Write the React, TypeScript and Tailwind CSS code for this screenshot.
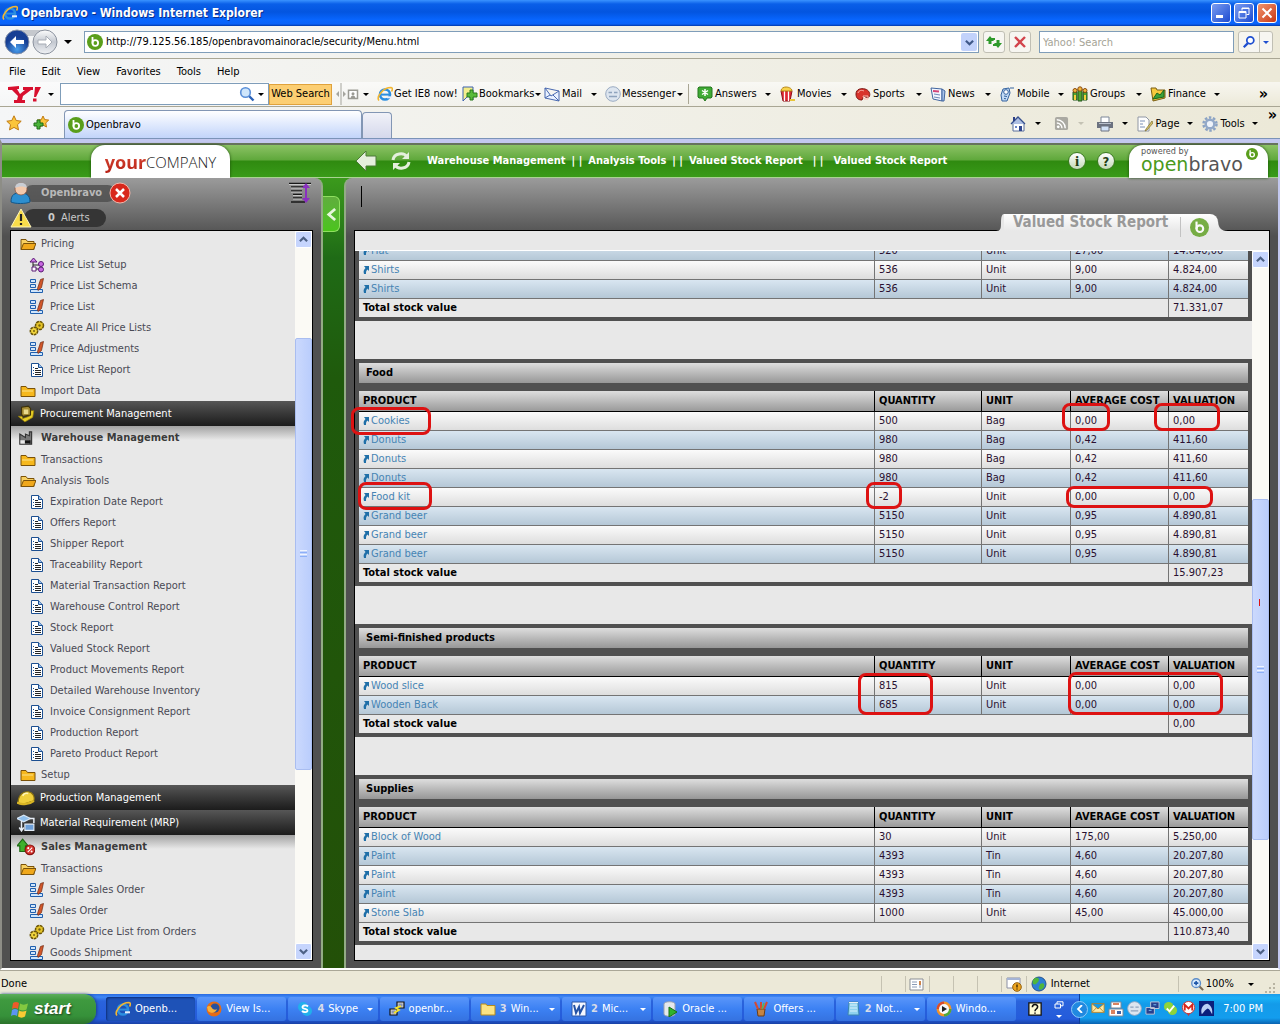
import React from "react";

type IconName = keyof typeof icons;

interface MenuEntry {
  kind: "folder" | "item" | "module" | "open";
  icon: IconName;
  label: string;
}

interface StockRow {
  product: string;
  quantity: string;
  unit: string;
  cost: string;
  value: string;
}

interface StockGroup {
  name: string;
  rows: StockRow[];
  total: string;
}

const icons = {
  ie: (
    <>
      <circle cx="8" cy="8.5" r="5" fill="none" stroke="#2b8ee0" strokeWidth="2.6" />
      <path d="M4 8.6h9" stroke="#2b8ee0" strokeWidth="2" />
      <path d="M10 10.3h5v2h-5z" fill="#e9eefb" />
      <path d="M2 14.5C-1 11 6 1.500 14 1.500c2 .3 1.500 2.500.5 4" fill="none" stroke="#f2b632" strokeWidth="1.600" />
    </>
  ),
  ob: (
    <>
      <circle cx="8" cy="8" r="8" fill="#5a9e1c" />
      <path d="M5.500 3v6.500" stroke="#fff" strokeWidth="1.800" />
      <circle cx="8.300" cy="9" r="2.800" fill="none" stroke="#fff" strokeWidth="1.800" />
    </>
  ),
  lens: (
    <>
      <path d="M9.500 9.500l5 5" stroke="#2a62b8" strokeWidth="2.400" />
      <circle cx="6.500" cy="6.500" r="4.800" fill="#cfe6fb" stroke="#5a8fd8" strokeWidth="1.600" />
    </>
  ),
  searchBlue: (
    <>
      <path d="M7 9l-5 5" stroke="#1f4fd0" strokeWidth="2.600" />
      <circle cx="9.500" cy="6" r="4" fill="#fff" stroke="#1f4fd0" strokeWidth="2" />
    </>
  ),
  bookmark: (
    <>
      <path d="M1 1h10v13l-5-4-5 5z" fill="#f3ee8e" stroke="#3d62b0" />
      <path d="M8 4h3v3h4v4h-4v3H8v-3H5V7h3z" fill="#58bb3a" stroke="#2b7a1c" />
    </>
  ),
  mail: <path d="M1 2l14 3v10L1 12zM1 2l6 8 8-5M1 12l5-3M15 15L9 9" fill="#eaf2ff" stroke="#4969b0" />,
  face: (
    <>
      <circle cx="8" cy="8" r="7.300" fill="#dde5ef" stroke="#9aabc2" />
      <path d="M3.500 6.500h3.500M9 6.500h3.500M4 10.500h8" stroke="#8fa3bd" strokeWidth="1.300" />
    </>
  ),
  answers: (
    <>
      <path d="M2 1h12l1 1v9l-1 1h-4l-2 3-2-3H2l-1-1V2z" fill="#3faa35" stroke="#24771e" />
      <path d="M8 3v7M5 4.500l6 4M11 4.500l-6 4" stroke="#fff" strokeWidth="1.500" />
    </>
  ),
  movies: (
    <>
      <path d="M2 5h11l-2 10H4z" fill="#e02832" stroke="#8c1018" />
      <path d="M5.500 5v10M9.500 5v10" stroke="#fff" strokeWidth="1.300" />
      <path d="M2 5c0-3 3-4 5-4s6 1 6 4z" fill="#f8d34a" stroke="#b78718" />
      <path d="M11 13h5v2h-5z" fill="#e8c53a" />
    </>
  ),
  sports: (
    <>
      <path d="M1 8c0-5 5-6 9-5 4 1 6 5 4 8-2 1-4 0-5-1l-2 4c-4 0-6-2-6-6z" fill="#d8332c" stroke="#7d1714" />
      <path d="M3 7c1-3 4-3 6-2M8 10h5v3H9z" stroke="#f9b7ae" fill="none" />
    </>
  ),
  news: (
    <>
      <path d="M1 2l11 1v12L3 13z" fill="#f3f6ff" stroke="#40659f" />
      <path d="M12 3l3 2-1 10h-2z" fill="#a9c4ea" stroke="#40659f" />
      <path d="M3 5l6 .5" stroke="#d34477" strokeWidth="2" />
      <path d="M4 8l6 1M4 11l6 1" stroke="#6e88b5" />
    </>
  ),
  mobile: (
    <>
      <path d="M4 3l6-1 1 5-3 8H3L2 9z" fill="#c3dbf5" stroke="#34629f" />
      <circle cx="7" cy="6" r="2.300" fill="#fff" stroke="#34629f" />
      <path d="M5 10l3 .5M5 12.500l2 .3M12 1v2M14 1v2" stroke="#34629f" />
    </>
  ),
  groups: (
    <>
      <path d="M1 6h4v8H1zM6 3h4v12H6zM11 6h4v8h-4z" fill="#4fa531" stroke="#23571a" />
      <circle cx="3" cy="4.500" r="2" fill="#f2b63b" stroke="#8a4a12" />
      <circle cx="8" cy="3" r="2.200" fill="#f2b63b" stroke="#8a4a12" />
      <circle cx="13" cy="4.500" r="2" fill="#f2b63b" stroke="#8a4a12" />
      <path d="M3 9v5M13 9v5" stroke="#f6cf3c" strokeWidth="2" />
    </>
  ),
  finance: (
    <>
      <path d="M1 2h5l1 2h8v8l-12 3z" fill="#f7c93d" stroke="#7a5f14" />
      <path d="M3 13l4-6 3 2 4-5v7z" fill="#3ba23b" stroke="#1d651d" />
    </>
  ),
  toolbarGrey: (
    <>
      <path d="M2 3h12v11H2z" fill="#fff" stroke="#9b9b94" strokeWidth="2" />
      <path d="M5 14c0-3 1-4 3-4s3 1 3 4z" fill="#9b9b94" />
      <circle cx="8" cy="7.500" r="2" fill="#9b9b94" />
    </>
  ),
  star: <path d="M8 .8l2.200 4.700 5 .7-3.700 3.500 1 5.200L8 12.400l-4.500 2.500 1-5.200L.8 6.200l5-.7z" fill="#fbc53a" stroke="#c07a12" />,
  starPlus: (
    <>
      <path d="M10 1l1.700 3.600 4 .5-3 2.800.8 4.100L10 10l-3.500 2 .8-4.100-3-2.800 4-.5z" fill="#fbc53a" stroke="#c07a12" />
      <path d="M4 5h3v3h3v3H7v3H4v-3H1V8h3z" fill="#4bb43a" stroke="#1e6d19" />
    </>
  ),
  home: (
    <>
      <path d="M3 7h11v8H3z" fill="#fff" stroke="#5a6f9c" />
      <path d="M1 8l7-7 7 7" fill="#aebfe2" stroke="#354f8e" strokeWidth="1.300" />
      <path d="M3 1h2v4H3z" fill="#2c3f84" />
      <path d="M9 10h3v5H9z" fill="#30478f" />
      <path d="M5 10h2v2H5z" fill="#6b86c6" />
    </>
  ),
  rss: (
    <>
      <rect x="1" y="1" width="14" height="14" rx="2" fill="#aaa9a2" />
      <circle cx="4.500" cy="11.500" r="1.500" fill="#fff" />
      <path d="M3 7.500a5.500 5.500 0 0 1 5.500 5.500M3 4a9 9 0 0 1 9 9" fill="none" stroke="#fff" strokeWidth="1.500" />
    </>
  ),
  printer: (
    <>
      <path d="M4 1h8v6H4z" fill="#fff" stroke="#7c8798" />
      <path d="M0 6h16v6H0z" fill="#6c7280" />
      <path d="M2 7h12v1H2z" fill="#b9c0cc" />
      <path d="M4 10h8v5H4z" fill="#d3e2f7" stroke="#6c7280" />
    </>
  ),
  page: (
    <>
      <path d="M1 1h8l3 3v11H1z" fill="#fdfdfd" stroke="#9097a4" />
      <path d="M3 5h5M3 8h3M3 11h5" stroke="#7a90b8" />
      <path d="M15 5l-6 8-1 2 2-1 6-7z" fill="#d5c26c" stroke="#7d6b28" strokeWidth=".7" />
    </>
  ),
  gear: (
    <>
      <circle cx="8" cy="8" r="6.500" fill="none" stroke="#8ba3c4" strokeWidth="2.500" strokeDasharray="2.500 1.600" />
      <circle cx="8" cy="8" r="4.300" fill="#eef3fa" stroke="#93a9c8" strokeWidth="2.400" />
    </>
  ),
  folder: (
    <>
      <path d="M1 3.500h5l1.500 2H15v8H1z" fill="#f6b81d" stroke="#7b5208" />
      <path d="M2 7.500h11v1H2z" fill="#fde28a" />
    </>
  ),
  folderOpen: (
    <>
      <path d="M1 3.500h5l1.500 2H14v8H1z" fill="#f7d061" stroke="#7b5208" />
      <path d="M3.500 7.500H16l-2.500 6H1z" fill="#f0a81b" stroke="#7b5208" />
    </>
  ),
  form: (
    <>
      <path d="M1.500 1.500h5v3h-5zM1.500 6.500h5v3h-5zM1.500 11.500h12v3h-12z" fill="#cfe5fb" stroke="#1f5fae" />
      <path d="M11.500 1.500l3-1-2 9-3.500 3-.5-2z" fill="#d2572a" stroke="#6e2a12" strokeWidth=".7" />
    </>
  ),
  process: (
    <>
      <circle cx="10.500" cy="5.500" r="4" fill="#e6c528" stroke="#6a5408" strokeWidth="1.500" strokeDasharray="3 .7" />
      <circle cx="5" cy="11" r="3.700" fill="#f0d43c" stroke="#6a5408" strokeWidth="1.500" strokeDasharray="2.600 .7" />
      <circle cx="10.500" cy="5.500" r="1.200" fill="#7a6410" />
      <circle cx="5" cy="11" r="1" fill="#7a6410" />
    </>
  ),
  report: (
    <>
      <path d="M2.500 1.500h7l4 4v9h-11z" fill="#fff" stroke="#1c4f91" />
      <path d="M9.500 1.500v4h4" fill="#9dc2ec" stroke="#1c4f91" />
      <path d="M4 5.500h1M4 8.500h1M4 11.500h1" stroke="#1c4f91" />
      <path d="M6 6.500h3M6 8.500h6M6 10.500h6M6 12.500h6" stroke="#222" />
    </>
  ),
  tree: (
    <>
      <path d="M4 5v7h6M4 8h6" fill="none" stroke="#222" />
      <path d="M4.500 1L8 5H1z" fill="#d27de8" stroke="#5a1a74" />
      <circle cx="12" cy="7" r="2.500" fill="#c968e2" stroke="#5a1a74" />
      <circle cx="12" cy="12.500" r="2.500" fill="#c968e2" stroke="#5a1a74" />
      <path d="M3 10h4v4H3z" fill="#fff" stroke="#5a1a74" />
    </>
  ),
  procurement: (
    <>
      <path d="M1 10l4 0 0 2 6-2 0-5 4 0-1 6-7 4z" fill="#e8ce26" stroke="#8a7408" strokeWidth=".6" />
      <path d="M4 2l6-1 2 2v6l-7 1-1-2z" fill="#a58c34" stroke="#3d3208" />
      <path d="M6 4h4v4H6z" fill="#e9da8c" />
    </>
  ),
  warehouse: (
    <>
      <path d="M2.500 13.500v-9l5 3V4.500L11 6V2.500h2v11z" fill="#777" stroke="#333" />
      <path d="M3 10h8v3H3z" fill="#e8e8e8" />
      <path d="M7 10h5v3H7z" fill="#111" />
    </>
  ),
  helmet: (
    <>
      <path d="M1 12C1 5 6 2 10 2.500c4 .5 6 4 5 8L4 14z" fill="#f0cf3c" stroke="#8c7310" />
      <path d="M0 12c4 3 12 1 15-1.500" fill="none" stroke="#d9b524" strokeWidth="2" />
      <path d="M5 6c1-2 3-2.500 5-2" stroke="#fff6b8" fill="none" strokeWidth="1.500" />
    </>
  ),
  mrp: (
    <>
      <path d="M0 4l6-3 6 3-6 3z" fill="#8fc0ee" stroke="#d6e6f6" />
      <path d="M4 6v8M2 12l2 3 2-3M11 4h4v4" fill="none" stroke="#e8eef6" strokeWidth="1.300" />
      <path d="M7 9h8v5.500H7z" fill="#6d9fd8" stroke="#e3ecf6" />
    </>
  ),
  sales: (
    <>
      <path d="M5 1l5 6H7.500v5h-5V7H0z" fill="#3fb02c" stroke="#1e6a14" />
      <circle cx="11.500" cy="10.500" r="4.300" fill="#d8342e" stroke="#8a1512" />
      <path d="M9.500 12.500l4-4" stroke="#fff" />
      <circle cx="10" cy="9" r=".9" fill="#fff" />
      <circle cx="13" cy="12" r=".9" fill="#fff" />
    </>
  ),
  firefox: (
    <>
      <circle cx="8" cy="8" r="7.500" fill="#e56b16" />
      <circle cx="9" cy="7" r="4.500" fill="#27509e" />
      <path d="M1 6c2-2 4-1 5 1 1 2 4 2 5 1-1 4-6 5-9 2z" fill="#f8b13c" />
    </>
  ),
  skype: (
    <>
      <circle cx="6" cy="6" r="5" fill="#21b0ec" />
      <circle cx="10" cy="10" r="5" fill="#21b0ec" />
      <path d="M11 5.500C9 3.500 5 4.500 5.500 6.500c.5 2 5 1 5 3s-4 2-5.500.5" fill="none" stroke="#fff" strokeWidth="1.800" />
    </>
  ),
  putty: (
    <>
      <path d="M8 1h7v6H8zM1 8h7v6H1z" fill="#d4d4d4" stroke="#111" strokeWidth="1.200" />
      <path d="M9.500 2.500h4v3h-4zM2.500 9.500h4v3h-4z" fill="#8a94b0" />
      <path d="M12 5L7 7l3 2-5 3" stroke="#f5e425" strokeWidth="1.800" fill="none" />
    </>
  ),
  winFolder: <path d="M1 3h5l1 1.500h8V14H1z" fill="#fbe384" stroke="#b68b1c" />,
  word: (
    <>
      <path d="M1 1h14v14H1z" fill="#f5f8ff" stroke="#2b57a8" />
      <path d="M3 4l2 8 3-6 1 6 4-8" fill="none" stroke="#2452a5" strokeWidth="2" />
    </>
  ),
  oracle: (
    <>
      <path d="M2 3c0-3 11-3 11 0v10c0 3-11 3-11 0z" fill="#e5e8ec" stroke="#9aa2ae" />
      <path d="M7 6l8 5-8 5z" fill="#2fb32d" stroke="#167014" />
    </>
  ),
  brushes: (
    <>
      <path d="M4 8h8l-1 7H5z" fill="#c48444" stroke="#6c3d14" />
      <path d="M5 8L2 1M8 8V1M11 8l3-7" stroke="#d44a32" strokeWidth="2" />
      <path d="M9 8l2-6" stroke="#5bb94b" strokeWidth="1.500" />
    </>
  ),
  notepad: (
    <>
      <path d="M4 1h9l1 13H3z" fill="#8fd2ee" stroke="#3b85b0" />
      <path d="M5 4h7M5 7h7M5 10h7" stroke="#d9f2fb" />
      <path d="M4 1h9v1H4z" fill="#e9eef2" />
    </>
  ),
  player: (
    <>
      <circle cx="8" cy="8" r="7.500" fill="#f2932a" />
      <path d="M8 8V.5A7.500 7.500 0 0 0 .5 8z" fill="#d94b2b" />
      <path d="M8 8h7.500A7.500 7.500 0 0 1 8 15.500z" fill="#4fa83a" />
      <circle cx="8" cy="8" r="5" fill="#f6f8fb" />
      <path d="M6 5l5 3-5 3z" fill="#222" />
    </>
  ),
  globe: (
    <>
      <circle cx="8" cy="8" r="7" fill="#2d7fd6" stroke="#27538d" />
      <path d="M4 2c4-1 5 2 3 4s-2 3-5 2c-1-3 0-5 2-6zM9 8c4-2 5 1 4 3s-4 4-5 2 1-3 1-5z" fill="#4fb53c" />
    </>
  ),
  blocked: (
    <>
      <path d="M1 2h13v10H1z" fill="#fff" stroke="#8b8fa5" />
      <path d="M1 2h13v2H1z" fill="#a5b4d6" />
      <circle cx="11" cy="11" r="4.300" fill="#eda520" stroke="#95600b" />
      <path d="M11 8.500v3M11 12.500v1" stroke="#402a00" strokeWidth="1.400" />
    </>
  ),
  sheet: (
    <>
      <path d="M1 3h13v11H1z" fill="#fff" stroke="#8b8f95" />
      <path d="M3 6h5M3 8.500h5M3 11h5M11 5v7" stroke="#8a9ab5" />
      <path d="M11 5v4" stroke="#d06b1a" strokeWidth="1.500" />
    </>
  ),
  zoom: (
    <>
      <path d="M10 10l5 5" stroke="#7a6a52" strokeWidth="2.400" />
      <circle cx="7" cy="7" r="5" fill="#d8ebfc" stroke="#5b8cc9" strokeWidth="1.500" />
      <path d="M4.500 7h5M7 4.500v5" stroke="#1d56a8" strokeWidth="1.800" />
    </>
  ),
  help: (
    <>
      <path d="M1 1h14v14H1z" fill="#fffbd6" stroke="#111" strokeWidth="1.500" />
      <path d="M5 6c0-4 6-4 6-.5C11 8 8 8 8 10.500M8 12v1.500" fill="none" stroke="#111" strokeWidth="1.800" />
    </>
  ),
  envelope: <path d="M1 3h14v10H1zM1 3l7 6 7-6M1 13l5-5M15 13l-5-5" fill="#fde9a4" stroke="#b3802a" />,
  notes: (
    <>
      <path d="M3 1h10v6H3zM1 8h14v7H1z" fill="#fff" stroke="#7c8798" />
      <path d="M5 3h6M3 10h4M3 12h4" stroke="#d0592a" strokeWidth="1.300" />
      <path d="M9 10h4v3H9z" fill="#3c62a8" />
    </>
  ),
  network: (
    <>
      <path d="M6 1h9v7H6zM1 7h9v7H1z" fill="#26408f" stroke="#c3c9d8" />
      <path d="M4 10h3M9 4h3" stroke="#7dc4f5" />
    </>
  ),
  online: (
    <>
      <circle cx="6" cy="6" r="5" fill="#8ed33a" />
      <circle cx="10" cy="10" r="5" fill="#8ed33a" />
      <path d="M4 8l3 3 5-6" fill="none" stroke="#fff" strokeWidth="2" />
    </>
  ),
  gmail: (
    <>
      <circle cx="8" cy="7" r="6.500" fill="#fff" stroke="#c33" />
      <path d="M4 10V4l4 4 4-4v6" fill="none" stroke="#d9261c" strokeWidth="2" />
      <path d="M6 13l2 3 2-3z" fill="#c33" />
    </>
  ),
  night: (
    <>
      <path d="M0 0h16v16H0z" fill="#0b1f7c" />
      <path d="M3 14C1 8 5 3 9 3c3 1 6 5 5 11-2-3-3-6-5-6-2 1-3 3-6 6z" fill="#b9cff5" />
    </>
  ),
  refresh: (
    <>
      <path d="M0 7l4-5 4 5H5.500v3H2.500V7z" fill="#2f9a2b" />
      <path d="M4 4h5v2H4zM7 10h5v2H7z" fill="#2f9a2b" />
      <path d="M16 9l-4 5-4-5h2.500V6h3v3z" fill="#2f9a2b" />
    </>
  ),
  stop: <path d="M3 3l10 10M13 3L3 13" stroke="#d2444c" strokeWidth="2.400" />,
};

interface IconProps {
  name: IconName;
  className?: string;
}

const Icon: React.FC<IconProps> = ({ name, className = "size-4" }) => (
  <svg viewBox="0 0 16 16" className={`${className} shrink-0`} aria-hidden="true">
    {icons[name]}
  </svg>
);

const Caret: React.FC<{ tone?: string }> = ({ tone = "border-t-black" }) => (
  <span className={`h-0 w-0 shrink-0 border-x-[3px] border-t-[3px] border-x-transparent ${tone}`} />
);

const portals: { icon: IconName; label: string; width: string }[] = [
  { icon: "answers", label: "Answers", width: "w-[82px]" },
  { icon: "movies", label: "Movies", width: "w-[76px]" },
  { icon: "sports", label: "Sports", width: "w-[75px]" },
  { icon: "news", label: "News", width: "w-[69px]" },
  { icon: "mobile", label: "Mobile", width: "w-[73px]" },
  { icon: "groups", label: "Groups", width: "w-[78px]" },
  { icon: "finance", label: "Finance", width: "w-[78px]" },
];

const menu: MenuEntry[] = [
  { kind: "folder", icon: "folderOpen", label: "Pricing" },
  { kind: "item", icon: "tree", label: "Price List Setup" },
  { kind: "item", icon: "form", label: "Price List Schema" },
  { kind: "item", icon: "form", label: "Price List" },
  { kind: "item", icon: "process", label: "Create All Price Lists" },
  { kind: "item", icon: "form", label: "Price Adjustments" },
  { kind: "item", icon: "report", label: "Price List Report" },
  { kind: "folder", icon: "folder", label: "Import Data" },
  { kind: "module", icon: "procurement", label: "Procurement Management" },
  { kind: "open", icon: "warehouse", label: "Warehouse Management" },
  { kind: "folder", icon: "folder", label: "Transactions" },
  { kind: "folder", icon: "folderOpen", label: "Analysis Tools" },
  { kind: "item", icon: "report", label: "Expiration Date Report" },
  { kind: "item", icon: "report", label: "Offers Report" },
  { kind: "item", icon: "report", label: "Shipper Report" },
  { kind: "item", icon: "report", label: "Traceability Report" },
  { kind: "item", icon: "report", label: "Material Transaction Report" },
  { kind: "item", icon: "report", label: "Warehouse Control Report" },
  { kind: "item", icon: "report", label: "Stock Report" },
  { kind: "item", icon: "report", label: "Valued Stock Report" },
  { kind: "item", icon: "report", label: "Product Movements Report" },
  { kind: "item", icon: "report", label: "Detailed Warehouse Inventory" },
  { kind: "item", icon: "report", label: "Invoice Consignment Report" },
  { kind: "item", icon: "report", label: "Production Report" },
  { kind: "item", icon: "report", label: "Pareto Product Report" },
  { kind: "folder", icon: "folder", label: "Setup" },
  { kind: "module", icon: "helmet", label: "Production Management" },
  { kind: "module", icon: "mrp", label: "Material Requirement (MRP)" },
  { kind: "open", icon: "sales", label: "Sales Management" },
  { kind: "folder", icon: "folderOpen", label: "Transactions" },
  { kind: "item", icon: "form", label: "Simple Sales Order" },
  { kind: "item", icon: "form", label: "Sales Order" },
  { kind: "item", icon: "process", label: "Update Price List from Orders" },
  { kind: "item", icon: "form", label: "Goods Shipment" },
];

const row = (product: string, quantity: string, unit: string, cost: string, value: string): StockRow => ({
  product,
  quantity,
  unit,
  cost,
  value,
});

const clothes: StockGroup = {
  name: "",
  rows: [
    row("Hat", "520", "Unit", "27,00", "14.040,00"),
    row("Shirts", "536", "Unit", "9,00", "4.824,00"),
    row("Shirts", "536", "Unit", "9,00", "4.824,00"),
  ],
  total: "71.331,07",
};

const groups: StockGroup[] = [
  {
    name: "Food",
    rows: [
      row("Cookies", "500", "Bag", "0,00", "0,00"),
      row("Donuts", "980", "Bag", "0,42", "411,60"),
      row("Donuts", "980", "Bag", "0,42", "411,60"),
      row("Donuts", "980", "Bag", "0,42", "411,60"),
      row("Food kit", "-2", "Unit", "0,00", "0,00"),
      row("Grand beer", "5150", "Unit", "0,95", "4.890,81"),
      row("Grand beer", "5150", "Unit", "0,95", "4.890,81"),
      row("Grand beer", "5150", "Unit", "0,95", "4.890,81"),
    ],
    total: "15.907,23",
  },
  {
    name: "Semi-finished products",
    rows: [
      row("Wood slice", "815", "Unit", "0,00", "0,00"),
      row("Wooden Back", "685", "Unit", "0,00", "0,00"),
    ],
    total: "0,00",
  },
  {
    name: "Supplies",
    rows: [
      row("Block of Wood", "30", "Unit", "175,00", "5.250,00"),
      row("Paint", "4393", "Tin", "4,60", "20.207,80"),
      row("Paint", "4393", "Tin", "4,60", "20.207,80"),
      row("Paint", "4393", "Tin", "4,60", "20.207,80"),
      row("Stone Slab", "1000", "Unit", "45,00", "45.000,00"),
    ],
    total: "110.873,40",
  },
];

const tasks: { icon: IconName; label: string; count?: string; active?: boolean }[] = [
  { icon: "ie", label: "Openb...", active: true },
  { icon: "firefox", label: "View Is..." },
  { icon: "skype", label: "Skype", count: "4" },
  { icon: "putty", label: "openbr..." },
  { icon: "winFolder", label: "Win...", count: "3" },
  { icon: "word", label: "Mic...", count: "2" },
  { icon: "oracle", label: "Oracle ..." },
  { icon: "brushes", label: "Offers ..." },
  { icon: "notepad", label: "Not...", count: "2" },
  { icon: "player", label: "Windo..." },
];

// hand drawn review marks, measured from the corners of the report frame
const marks = [
  "left-[-4px] top-[176px] h-[28px] w-[80px]",
  "left-[3px] top-[251px] h-[28px] w-[74px]",
  "right-[159px] top-[172px] h-[28px] w-[48px]",
  "right-[49px] top-[172px] h-[28px] w-[66px]",
  "right-[367px] top-[251px] h-[27px] w-[36px]",
  "right-[56px] top-[255px] h-[22px] w-[147px]",
  "right-[336px] top-[442px] h-[42px] w-[75px]",
  "right-[46px] top-[441px] h-[43px] w-[155px]",
];

const TitleBar: React.FC = () => (
  <header className="flex h-[26px] shrink-0 items-center bg-[linear-gradient(#3a93ff_0,#0a5fe8_4px,#0355e0_12px,#0866ff_20px,#0a62f8_24px,#0238a8_26px)] pl-[2px] pr-[3px]">
    <Icon name="ie" />
    <h1 className="ml-[3px] flex-1 font-['DejaVu_Sans_Condensed','Noto_Sans',sans-serif] text-[12px] font-bold text-white [text-shadow:1px_1px_#0a2f8c]">
      Openbravo - Windows Internet Explorer
    </h1>
    <div className="flex gap-[3px]">
      <button aria-label="Minimize" className="flex size-5 items-end rounded-[3px] border border-white bg-linear-to-br from-[#7c9cf0] to-[#1c48d0] p-1">
        <span className="h-[3px] w-[7px] bg-white" />
      </button>
      <button aria-label="Restore" className="flex size-5 items-center justify-center rounded-[3px] border border-white bg-linear-to-br from-[#7c9cf0] to-[#1c48d0]">
        <svg viewBox="0 0 12 12" className="size-3" fill="none" stroke="#fff">
          <path d="M4 3.500V1h7v6.500H8.500M4 1.500h7M1 4.500h7v6.500H1zM1 5.500h7" />
        </svg>
      </button>
      <button aria-label="Close" className="flex size-5 items-center justify-center rounded-[3px] border border-white bg-linear-to-br from-[#f0936c] to-[#c8340c]">
        <svg viewBox="0 0 12 12" className="size-3" stroke="#fff" strokeWidth="2">
          <path d="M1.500 1.500l9 9M10.500 1.500l-9 9" />
        </svg>
      </button>
    </div>
  </header>
);

const AddressBar: React.FC = () => (
  <div className="flex h-[33px] shrink-0 items-center border-b border-[#a9a694] bg-linear-to-r from-[#f5f6f7] to-[#ece9d8] pl-1 pr-[7px]">
    <svg viewBox="0 0 56 28" className="h-7 w-14 shrink-0">
      <defs>
        <radialGradient id="back" cx=".5" cy=".8">
          <stop offset="0" stopColor="#4aa0ee" />
          <stop offset="1" stopColor="#173f94" />
        </radialGradient>
        <linearGradient id="fwd" x2="0" y2="1">
          <stop offset="0" stopColor="#fdfdfd" />
          <stop offset=".5" stopColor="#c3c8d0" />
          <stop offset="1" stopColor="#f0f2f5" />
        </linearGradient>
      </defs>
      <path d="M12 2h30v6H12z" fill="#c5c8cd" />
      <circle cx="13" cy="14" r="12" fill="url(#back)" stroke="#8591a8" />
      <circle cx="41" cy="14" r="12" fill="url(#fwd)" stroke="#8b929e" />
      <path d="M6 14l6-6v4h8v4h-8v4z" fill="#fff" />
      <path d="M48 14l-6-6v4h-8v4h8v4z" fill="#fff" stroke="#a8adb6" />
    </svg>
    <span className="ml-1 mr-[12px]">
      <span className="block h-0 w-0 border-x-4 border-t-4 border-x-transparent border-t-black" />
    </span>
    <div className="flex h-[22px] flex-1 items-center border border-[#7f9db9] bg-white pl-[2px] pr-px">
      <Icon name="ob" />
      <input aria-label="Address" defaultValue="http://79.125.56.185/openbravomainoracle/security/Menu.html" className="ml-[3px] flex-1 outline-none" />
      <button aria-label="Show addresses" className="flex h-[18px] w-4 items-center justify-center rounded-xs bg-[#c2d2fb]">
        <svg viewBox="0 0 10 10" className="size-[9px]" fill="none" stroke="#3f5888" strokeWidth="2.400">
          <path d="M1 3l4 4 4-4" />
        </svg>
      </button>
    </div>
    <button aria-label="Refresh" className="ml-1 flex size-[22px] items-center justify-center rounded-[3px] border border-[#c0bfb4] bg-[#f7f6f1]">
      <Icon name="refresh" />
    </button>
    <button aria-label="Stop" className="ml-1 flex size-[22px] items-center justify-center rounded-[3px] border border-[#c0bfb4] bg-[#f7f6f1]">
      <Icon name="stop" />
    </button>
    <input aria-label="Yahoo! Search" placeholder="Yahoo! Search" className="ml-2 h-[22px] w-[195px] border border-[#7f9db9] bg-white px-[3px] outline-none placeholder:text-[#a5a396]" />
    <div className="ml-1 flex h-[22px] items-center rounded-[3px] border border-[#c0bfb4] bg-[#f7f6f1]">
      <button aria-label="Search" className="flex h-full w-[21px] items-center justify-center border-r border-[#c0bfb4]">
        <Icon name="searchBlue" className="size-[14px]" />
      </button>
      <button aria-label="Search options" className="flex h-full w-3 items-center justify-center">
        <Caret tone="border-t-[#1f4fd0]" />
      </button>
    </div>
  </div>
);

const Toolbars: React.FC = () => (
  <div className="shrink-0 border-b border-[#a9a694] bg-linear-to-r from-[#f5f6f7] to-[#ece9d8]">
    <nav className="flex h-[23px] items-center gap-4 pl-[9px] pt-[3px]">
      {["File", "Edit", "View", "Favorites", "Tools", "Help"].map((m) => (
        <button key={m}>{m}</button>
      ))}
    </nav>
    <div className="flex h-6 items-center bg-linear-to-b from-white/60 to-transparent pr-3">
      <svg viewBox="0 0 34 18" className="ml-2 h-[18px] w-[34px]" fill="#d8102f">
        <path d="M0 2l11-1v3H9l3 5 5-4h-2V2h10v3h-2l-8 6-1 4h3v3H6v-3h3l1-4-6-6H0z" />
        <path d="M27 2h6l-5 10h-2zM25 13.500h3.500v3H25z" />
      </svg>
      <span className="ml-[6px] mr-[6px] flex">
        <Caret />
      </span>
      <div className="flex h-[22px] w-[209px] items-center border border-[#7f9db9] bg-white pr-1">
        <input aria-label="Web Search" className="w-0 flex-1 outline-none" />
        <Icon name="lens" />
        <span className="ml-[3px] flex">
          <Caret />
        </span>
      </div>
      <button className="h-[21px] w-[63px] border border-[#e0a23c] bg-[#fcce72] whitespace-nowrap">Web Search</button>
      <svg viewBox="0 0 10 22" className="ml-1 h-[22px] w-[10px]" fill="#a5a59e">
        <path d="M4.500 0h1v22h-1zM0 11l3-3v6zM10 11L7 8v6z" />
      </svg>
      <Icon name="toolbarGrey" className="ml-px size-3" />
      <span className="ml-[4px] mr-2 flex">
        <Caret />
      </span>
      <button className="flex w-[85px] items-center gap-[1px] whitespace-nowrap">
        <Icon name="ie" />
        Get IE8 now!
      </button>
      <button className="flex w-[82px] items-center gap-[1px]">
        <Icon name="bookmark" />
        Bookmarks
        <Caret />
      </button>
      <button className="flex w-[61px] items-center gap-[2px] pr-[8px]">
        <Icon name="mail" />
        Mail
        <span className="ml-auto flex">
          <Caret />
        </span>
      </button>
      <button className="flex h-5 w-[84px] items-center gap-[1px] border-r border-[#a9a694]">
        <Icon name="face" />
        Messenger
        <Caret />
      </button>
      <div className="ml-2 flex">
        {portals.map((p) => (
          <button key={p.label} className={`flex items-center gap-[2px] pr-[8px] ${p.width}`}>
            <Icon name={p.icon} />
            {p.label}
            <span className="ml-auto flex">
              <Caret />
            </span>
          </button>
        ))}
      </div>
      <button aria-label="More" className="ml-auto text-[16px] leading-4 font-bold">
        »
      </button>
    </div>
  </div>
);

const TabRow: React.FC = () => (
  <div className="flex h-8 shrink-0 items-end border-b border-[#7b93b8] bg-linear-to-r from-[#f5f6f7] to-[#ece9d8] pl-[6px]">
    <div className="flex w-[58px] gap-[11px] self-center">
      <button aria-label="Favorites Center">
        <Icon name="star" />
      </button>
      <button aria-label="Add to Favorites">
        <Icon name="starPlus" />
      </button>
    </div>
    <button className="flex h-7 w-[298px] items-center gap-[2px] rounded-t-sm border border-b-0 border-[#8296b4] bg-linear-to-b from-white to-[#c2d4fa] px-[3px]">
      <Icon name="ob" />
      Openbravo
    </button>
    <button aria-label="New Tab" className="h-[26px] w-[30px] rounded-t-sm border border-b-0 border-[#8296b4] bg-linear-to-b from-[#f1f2f8] to-[#d5d8ec]" />
    <div className="mr-[26px] ml-auto flex items-center gap-[9px] self-center pt-[2px]">
      <Icon name="home" />
      <Caret />
      <Icon name="rss" className="ml-1 size-[15px]" />
      <Caret tone="border-t-[#c4c2b4]" />
      <Icon name="printer" className="ml-1 size-4" />
      <Caret />
      <button className="flex items-center gap-[3px]">
        <Icon name="page" />
        Page
        <span className="ml-[4px] flex">
          <Caret />
        </span>
      </button>
      <button className="flex items-center gap-[3px]">
        <Icon name="gear" />
        Tools
        <span className="ml-[4px] flex">
          <Caret />
        </span>
      </button>
    </div>
    <button aria-label="More commands" className="-ml-4 mr-[3px] self-start text-[16px] leading-4 font-bold">
      »
    </button>
  </div>
);

const AppHeader: React.FC = () => (
  <div className="flex h-[35px] shrink-0 items-end border-b border-[#a9d392] border-t-2 border-t-[#66735c] bg-[linear-gradient(#8cc265_0,#5fa83b_15px,#2f8a10_16px,#3a9c19_33px)]">
    <div className="flex h-full w-[352px] shrink-0 justify-start pl-[89px]">
      <div className="flex h-[33px] w-[139px] items-center justify-center rounded-t-[14px] bg-white shadow-[0_0_3px_#1d4a0c]">
        <span className="bg-linear-to-b from-[#e0503c] to-[#b3160c] bg-clip-text font-['Noto_Sans',sans-serif] text-[18px] leading-7 font-bold text-transparent">
          your
        </span>
        <span className="font-['Open_Sans',sans-serif] text-[15px] leading-7 font-light text-[#222]">COMPANY</span>
      </div>
    </div>
    <div className="flex h-full flex-1 items-center">
      <button aria-label="Back">
        <svg viewBox="0 0 24 22" className="h-[22px] w-6">
          <path d="M2 11L12 1v5h10v10H12v5z" fill="#e4efdc" stroke="#4c7a38" />
        </svg>
      </button>
      <button aria-label="Refresh report" className="ml-3">
        <svg viewBox="0 0 22 20" className="h-5 w-[22px]" fill="none" stroke="#e4efdc" strokeWidth="3">
          <path d="M3 9c1-7 11-8 14-3M19 11c-1 7-11 8-14 3" />
          <path d="M19 1v7h-7zM3 19v-7h7z" fill="#e4efdc" stroke="none" />
        </svg>
      </button>
      <p className="ml-[15px] flex gap-[6px] font-bold whitespace-nowrap text-white">
        <a href="#warehouse">Warehouse Management</a>
        <span>| |</span>
        <a href="#analysis">Analysis Tools</a>
        <span>| |</span>
        <a href="#report">Valued Stock Report</a>
        <span className="px-1">| |</span>
        <a href="#report">Valued Stock Report</a>
      </p>
      <button aria-label="About" className="ml-auto flex size-[18px] items-center justify-center rounded-full border border-[#3c7a22] bg-linear-to-b from-white to-[#c3d9b8] font-['Liberation_Serif',serif] text-[15px] leading-none font-bold text-[#1f3d14]">
        i
      </button>
      <button aria-label="Help" className="ml-[11px] flex size-[18px] items-center justify-center rounded-full border border-[#3c7a22] bg-linear-to-b from-white to-[#c3d9b8] text-[13px] leading-none font-bold text-[#1f3d14]">
        ?
      </button>
      <div className="relative ml-[14px] mr-[10px] flex h-[33px] w-[139px] flex-col rounded-t-[14px] bg-white pl-[12px] pt-[2px] shadow-[0_0_3px_#1d4a0c]">
        <span className="text-[9px] leading-[9px] text-[#555]">powered by</span>
        <span className="font-['DejaVu_Sans',sans-serif] text-[19px] leading-[17px] text-[#555]">
          <span className="text-[#4a9a1a]">open</span>bravo
        </span>
        <Icon name="ob" className="absolute top-[3px] right-[10px] size-3" />
      </div>
    </div>
  </div>
);

interface ScrollBarProps {
  before: string;
  thumb: string;
  after: string;
}

const ScrollBar: React.FC<ScrollBarProps> = ({ before, thumb, after }) => (
  <div className="flex w-[17px] shrink-0 flex-col bg-[#fbfaf5]">
    <button aria-label="Scroll up" className="flex h-[17px] items-center justify-center rounded-xs border border-white bg-[#c6d5fd]">
      <svg viewBox="0 0 10 10" className="size-[9px]" fill="none" stroke="#4d6185" strokeWidth="2.400">
        <path d="M1 7l4-4 4 4" />
      </svg>
    </button>
    <div className={before} />
    <div className={`${thumb} flex flex-col items-center justify-center gap-[1px] rounded-xs border border-[#a9bdf0] bg-linear-to-r from-[#cbd9fd] to-[#bacdfc]`}>
      <span className="h-px w-[7px] bg-[#eef4fe]" />
      <span className="h-px w-[7px] bg-[#8cb0f8]" />
      <span className="h-px w-[7px] bg-[#eef4fe]" />
      <span className="h-px w-[7px] bg-[#8cb0f8]" />
    </div>
    <div className={after} />
    <button aria-label="Scroll down" className="flex h-[17px] items-center justify-center rounded-xs border border-white bg-[#c6d5fd]">
      <svg viewBox="0 0 10 10" className="size-[9px]" fill="none" stroke="#4d6185" strokeWidth="2.400">
        <path d="M1 3l4 4 4-4" />
      </svg>
    </button>
  </div>
);

const menuStyles = {
  folder: "h-[21px] gap-[5px] pl-[9px] text-[#4a4a55]",
  item: "h-[21px] gap-[5px] pl-[18px] text-[#4a4a55]",
  module: "h-[25px] gap-[5px] bg-linear-to-b from-[#575757] to-[#1c1c1c] pl-[6px] text-white",
  open: "h-[23px] gap-[6px] bg-[linear-gradient(#a2a2a2,#e8e8e8_14px)] pl-[6px] font-bold text-[#3b3b3b]",
};

const Sidebar: React.FC = () => (
  <aside className="flex w-[321px] shrink-0 flex-col rounded-tr-lg border-r-2 border-[#93ab86] bg-[linear-gradient(#9b9b9b,#505050_58px)] px-2 pb-[7px]">
    <div className="flex h-[52px] shrink-0 items-start justify-between pt-[2px]">
      <div>
        <div className="flex h-[26px] items-center">
          <svg viewBox="0 0 22 22" className="z-10 size-[22px]">
            <path d="M1 20c0-8 4-9 9-9s10 1 10 9c-4 2-15 2-19 0z" fill="#2d8fd0" stroke="#145586" />
            <circle cx="11" cy="7" r="6" fill="#f3c9ac" stroke="#8a4f3a" strokeWidth=".7" />
            <path d="M5 6c0-7 12-7 12 0-3-2-8-2-12 0z" fill="#c8cdd4" />
          </svg>
          <span className="-ml-2 flex h-[17px] w-[92px] items-center rounded-full bg-[#4c4c4c]/80 pl-[17px] font-bold text-[#b9b9b9]">Openbravo</span>
          <button aria-label="Log out" className="-ml-[7px]">
            <svg viewBox="0 0 22 22" className="size-[22px]">
              <circle cx="11" cy="11" r="10" fill="#d8281c" stroke="#f4b4a8" />
              <path d="M7 7l8 8M15 7l-8 8" stroke="#fff" strokeWidth="2.500" />
            </svg>
          </button>
        </div>
        <div className="flex h-[24px] items-center">
          <svg viewBox="0 0 22 20" className="z-10 h-5 w-[22px]">
            <path d="M11 1l10 18H1z" fill="#f8dc4a" stroke="#fdf4b8" />
            <path d="M11 6v7M11 15v2" stroke="#222" strokeWidth="2.200" />
          </svg>
          <a href="#alerts" className="-ml-2 flex h-[18px] w-[82px] items-center gap-[6px] rounded-full bg-[#353535] pl-6 text-[#c9c9c9]">
            <b>0</b>Alerts
          </a>
        </div>
      </div>
      <button aria-label="Expand menu" className="mr-[2px] mt-[2px]">
        <svg viewBox="0 0 22 22" className="size-[22px]">
          <path d="M0 1.500h22M2 5h14M2 9h11M4 12.500h9M4 16h9M2 20h14" stroke="#181818" strokeWidth="1.300" />
          <path d="M0 2.500h22M2 6h12M2 10h11M4 13.500h9M4 17h9" stroke="#ddd" strokeWidth=".8" />
          <path d="M17 1l4 5h-3v10h3l-4 5-4-5h3V6h-3z" fill="#8a2fc0" />
        </svg>
      </button>
    </div>
    <div className="flex min-h-0 flex-1 border border-black bg-[#e8e8e8]">
      <ul className="flex-1 overflow-hidden pt-[2px]">
        {menu.map((entry, idx) => (
          <li key={idx}>
            <a href="#menu" className={`flex items-center whitespace-nowrap ${menuStyles[entry.kind]}`}>
              <Icon name={entry.icon} className={entry.kind === "module" || entry.kind === "open" ? "size-[18px]" : "size-4"} />
              {entry.label}
            </a>
          </li>
        ))}
      </ul>
      <ScrollBar before="flex-[90]" thumb="flex-[432]" after="flex-[174]" />
    </div>
  </aside>
);

const cell = "border-l border-[#747474] pl-1 first:border-l-0";

const StockTable: React.FC<{ group: StockGroup }> = ({ group }) => (
  <section className="shrink-0 bg-[#505050] p-1">
    {group.name && (
      <h2 className="mb-2 h-5 bg-linear-to-b from-[#dedede] to-[#979797] pl-[7px] leading-5 font-bold">{group.name}</h2>
    )}
    <table className="w-full table-fixed border-separate border-spacing-0 text-left">
      <colgroup>
        <col />
        <col className="w-[107px]" />
        <col className="w-[89px]" />
        <col className="w-[98px]" />
        <col className="w-[80px]" />
      </colgroup>
      {group.name && (
        <thead>
          <tr className="h-[21px] bg-linear-to-b from-[#dedede] to-[#979797]">
            {["PRODUCT", "QUANTITY", "UNIT", "AVERAGE COST", "VALUATION"].map((h) => (
              <th key={h} className="border-b border-l border-black pl-1 leading-5 whitespace-nowrap first:border-l-0">
                {h}
              </th>
            ))}
          </tr>
        </thead>
      )}
      <tbody className="leading-[18px] text-[#2a1030] [&_td]:border-b [&_td]:border-b-[#747474]">
        {group.rows.map((r, idx) => (
          <tr
            key={idx}
            className={
              idx % 2 === (group.name ? 1 : 0)
                ? "bg-linear-to-b from-[#d9e6f1] to-[#b3c6d5]"
                : "bg-linear-to-b from-[#fbfbfb] to-[#dcdcdc]"
            }
          >
            <td className={cell}>
              <a href="#product" className="flex items-center gap-[2px] text-[#4684b4]">
                <svg viewBox="0 0 6 8" className="h-2 w-[6px]">
                  <path d="M1 0h5v5L4.500 3.500C3 5 3 6 3 8H1C0 5 1 3.500 2.500 2z" fill="#1f6fa8" />
                </svg>
                {r.product}
              </a>
            </td>
            <td className={cell}>{r.quantity}</td>
            <td className={cell}>{r.unit}</td>
            <td className={cell}>{r.cost}</td>
            <td className={cell}>{r.value}</td>
          </tr>
        ))}
      </tbody>
      <tfoot className="bg-[#e8e8e8] leading-[18px]">
        <tr>
          <th colSpan={4} className="pl-1 text-black">
            Total stock value
          </th>
          <td className="border-l border-[#747474] pl-1 text-[#2a1030]">{group.total}</td>
        </tr>
      </tfoot>
    </table>
  </section>
);

const ReportPanel: React.FC = () => (
  <main className="flex min-w-0 flex-1 flex-col rounded-tl-lg border-l-2 border-[#93ab86] bg-[linear-gradient(#9b9b9b,#505050_58px)] px-2 pb-[7px]">
    <div className="relative z-10 -mb-px flex h-[53px] shrink-0 items-end justify-between pl-[7px] pr-[42px]">
      <div className="mb-6 h-[21px] w-px bg-black" />
      <div className="flex h-[17px] items-end">
        <svg viewBox="0 0 8 17" className="h-[17px] w-2">
          <path d="M0 17c5 0 5-3 5-9 0-5 1-8 3-8v17z" fill="#e8e8e8" />
        </svg>
        <div className="flex h-[17px] w-[214px] items-start rounded-tr-lg bg-linear-to-b from-white to-[#e8e8e8] pl-[9px]">
          <h2 className="h-[17px] text-[15px] leading-[17px] font-bold whitespace-nowrap text-[#999]">Valued Stock Report</h2>
          <span className="ml-auto mt-[3px] h-[20px] w-px shrink-0 bg-[#c2c2c2]" />
          <Icon name="ob" className="ml-[9px] mr-[9px] mt-1 size-[19px] opacity-80" />
        </div>
        <svg viewBox="0 0 10 17" className="h-[17px] w-[10px]">
          <path d="M0 5c0 8 2 12 10 12H0z" fill="#e8e8e8" />
        </svg>
      </div>
    </div>
    <div className="relative flex min-h-0 flex-1 flex-col border border-black bg-[#e8e8e8]">
      <div className="h-5 shrink-0 border-b border-white" />
      <div className="flex min-h-0 flex-1">
        <div className="flex min-w-0 flex-1 flex-col justify-end gap-[38px] overflow-hidden pb-[15px]">
          <StockTable group={clothes} />
          {groups.map((g) => (
            <StockTable key={g.name} group={g} />
          ))}
        </div>
        <ScrollBar before="flex-[232]" thumb="flex-[341]" after="flex-[104]" />
      </div>
      {marks.map((m) => (
        <span key={m} className={`pointer-events-none absolute rounded-lg border-[3px] border-[#dd1212] ${m}`} />
      ))}
      <span className="pointer-events-none absolute top-[368px] right-[9px] h-[7px] w-px bg-[#dd1212]" />
    </div>
  </main>
);

const StatusBar: React.FC = () => (
  <footer className="flex h-6 shrink-0 items-center border-t border-[#aaa797] bg-[#ece9d8] pl-[1px] pr-1 pt-[3px]">
    <span className="flex-1">Done</span>
    <div className="flex h-4 items-center divide-x divide-[#c5c2b2] border-x border-[#c5c2b2] *:h-4 *:w-6">
      <span />
      <span className="flex justify-center">
        <Icon name="sheet" />
      </span>
      <span />
      <span />
      <span />
      <span className="flex justify-center">
        <Icon name="blocked" />
      </span>
    </div>
    <span className="flex w-[152px] items-center gap-1 border-r border-[#c5c2b2] pl-[4px]">
      <Icon name="globe" />
      Internet
    </span>
    <button className="ml-[11px] flex items-center gap-[2px]">
      <Icon name="zoom" className="size-[14px]" />
      100%
      <span className="ml-3 flex">
        <Caret />
      </span>
    </button>
    <svg viewBox="0 0 12 12" className="ml-[10px] size-3 self-end" fill="#b8b4a2">
      <path d="M9 9h2v2H9zM5 9h2v2H5zM1 9h2v2H1zM9 5h2v2H9zM5 5h2v2H5zM9 1h2v2H9z" />
    </svg>
  </footer>
);

const TaskBar: React.FC = () => (
  <div className="flex h-[30px] shrink-0 items-stretch bg-[linear-gradient(#2a6ae0_0,#4089f6_3px,#2a63dc_7px,#245bdb_25px,#1941a5_30px)] text-white">
    <button className="flex w-24 shrink-0 items-center gap-[5px] rounded-r-xl bg-[linear-gradient(#5cae5c_0,#3f9a3f_6px,#36913a_22px,#2b722b_30px)] pl-[11px] shadow-[1px_0_3px_#1c3f8c]">
      <svg viewBox="0 0 18 18" className="size-[18px]">
        <path d="M2 3c2-1.500 4-1.500 6 0L7 9C5 7.500 3 7.500 1 9z" fill="#ee5a2a" />
        <path d="M9 3.500c2 1.500 5 1.500 8 0l-1.500 6c-2 1.300-5 1.300-7.500 0z" fill="#83c940" />
        <path d="M1 10c2-1.500 4-1.500 6 0l-1 6c-2-1.500-4-1.500-6 0z" fill="#5c94f2" />
        <path d="M8 10.500c2 1.300 5 1.300 7.500 0L14 16.500c-2 1.500-5 1.500-7 0z" fill="#fbca34" />
      </svg>
      <span className="font-['Liberation_Sans',sans-serif] text-[17px] font-bold italic [text-shadow:1px_1px_2px_#1d3f1d]">start</span>
    </button>
    <div className="ml-[10px] flex min-w-0 flex-1 gap-[2px] py-[3px]">
      {tasks.map((t) => (
        <button
          key={t.label}
          className={`flex min-w-0 flex-1 items-center gap-1 rounded-[3px] pr-[5px] pl-[9px] whitespace-nowrap ${
            t.active
              ? "bg-[#1e52b7] shadow-[inset_1px_1px_2px_#0e2f7a]"
              : "bg-linear-to-b from-[#5a96fa] via-[#3c81f3] to-[#3572e0]"
          }`}
        >
          <Icon name={t.icon} />
          {t.count && <b className="text-[#d8dce8]">{t.count}</b>}
          {t.label}
          {t.count && (
            <span className="ml-auto flex">
              <Caret tone="border-t-white" />
            </span>
          )}
        </button>
      ))}
    </div>
    <div className="flex w-[63px] shrink-0 items-center gap-3 pl-3">
      <Icon name="help" className="size-[14px]" />
      <div className="flex flex-col items-center gap-[6px]">
        <svg viewBox="0 0 10 8" className="h-2 w-[10px]" fill="none" stroke="#fff">
          <path d="M3 3V.8h6v4H7M1 3h5.500v4H1z" />
        </svg>
        <Caret tone="border-t-white" />
      </div>
    </div>
    <div className="flex w-[201px] shrink-0 items-center border-l border-[#0b3f9c] bg-[linear-gradient(#1a9bea_0,#19b0f6_4px,#139be9_10px,#139dee_24px,#0a62b0_30px)] pr-[17px]">
      <button aria-label="Show hidden icons" className="-ml-[9px] flex size-[17px] shrink-0 items-center justify-center rounded-full border border-[#8ccaf8] bg-[#2189e0]">
        <svg viewBox="0 0 8 8" className="size-2" fill="none" stroke="#fff" strokeWidth="1.800">
          <path d="M6 0L2 4l4 4" />
        </svg>
      </button>
      <div className="ml-[3px] flex gap-[3px]">
        <Icon name="envelope" className="size-[14px]" />
        <Icon name="notes" className="size-4" />
        <Icon name="face" className="size-[15px]" />
        <Icon name="network" className="size-[15px]" />
        <Icon name="online" className="size-[15px]" />
        <Icon name="gmail" className="size-[15px]" />
        <Icon name="night" className="size-[15px]" />
      </div>
      <time className="ml-auto whitespace-nowrap">7:00 PM</time>
    </div>
  </div>
);

const App: React.FC = () => (
  <div className="flex h-screen flex-col overflow-hidden font-['DejaVu_Sans_Condensed','Liberation_Sans',sans-serif] text-[11px] leading-[14px] text-black">
    <TitleBar />
    <AddressBar />
    <Toolbars />
    <TabRow />
    <div className="flex min-h-0 flex-1 flex-col border-x-2 border-t-4 border-b-2 border-[#c3c8ef] border-b-white border-l-[#8d8d86] bg-[#2a7a12]">
      <AppHeader />
      <div className="flex min-h-0 flex-1 bg-[linear-gradient(#3b9a1c,#1f6b16_80px,#1f5a0c_200px,#235008)]">
        <Sidebar />
        <div className="w-[21px] shrink-0 pt-[18px]">
          <button aria-label="Hide menu" className="flex h-9 w-[17px] items-center justify-center rounded-r-md border border-l-0 border-[#8fe060] bg-linear-to-b from-[#5fae3c] to-[#4bc41c]">
            <svg viewBox="0 0 12 14" className="h-[13px] w-[11px]" fill="none" stroke="#e6f6dc" strokeWidth="3">
              <path d="M10 1L3 7l7 6" />
            </svg>
          </button>
        </div>
        <ReportPanel />
      </div>
    </div>
    <StatusBar />
    <TaskBar />
  </div>
);

export default App;
